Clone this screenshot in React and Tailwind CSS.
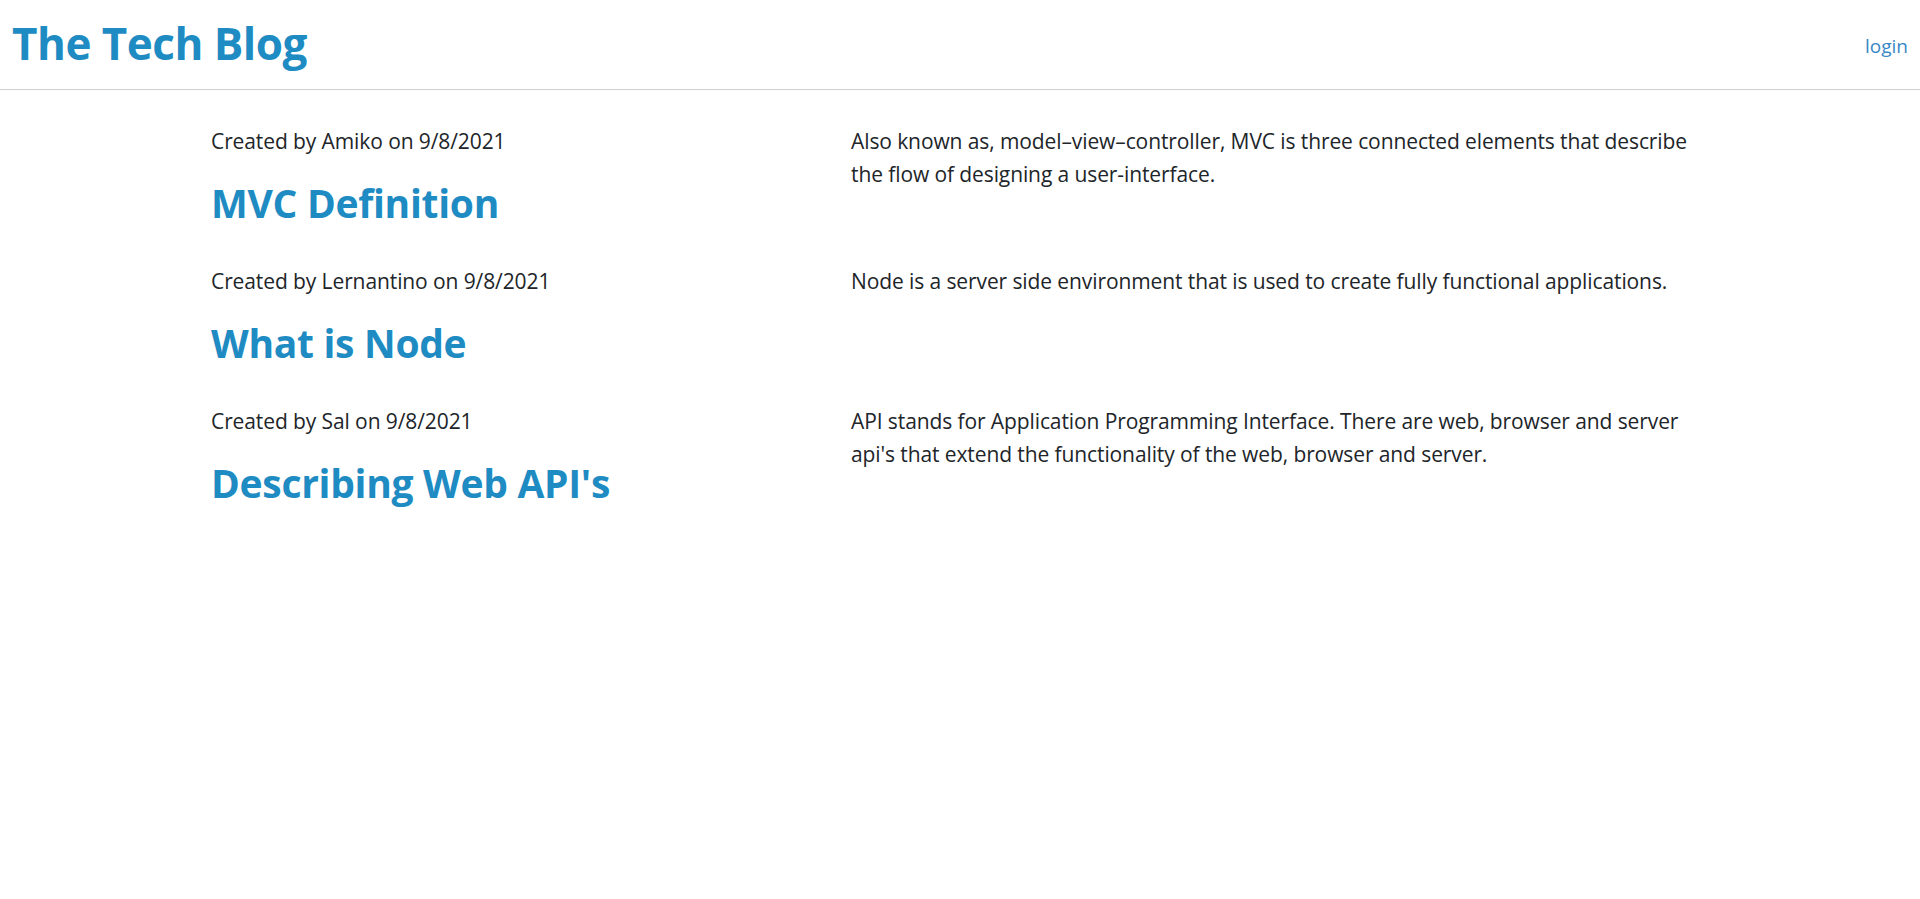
const posts = [
  {
    author: "Amiko",
    date: "9/8/2021",
    title: "MVC Definition",
    body: "Also known as, model–view–controller, MVC is three connected elements that describe the flow of designing a user-interface.",
  },
  {
    author: "Lernantino",
    date: "9/8/2021",
    title: "What is Node",
    body: "Node is a server side environment that is used to create fully functional applications.",
  },
  {
    author: "Sal",
    date: "9/8/2021",
    title: "Describing Web API's",
    body: "API stands for Application Programming Interface. There are web, browser and server api's that extend the functionality of the web, browser and server.",
  },
];

const App = () => {
  return (
    <div className="min-h-screen bg-white font-['Open_Sans',sans-serif] text-[#212529]">
      {/* Header */}
      <header className="h-[90px] flex items-center justify-between px-3 border-b border-[#cfcfcf]">
        <h1 className="text-[44px] font-bold text-[#1e8bc3] tracking-[-0.5px] leading-none pb-1">
          The Tech Blog
        </h1>
        <a href="/login" className="text-[19px] text-[#3a88c5] pt-1">
          login
        </a>
      </header>

      {/* Posts */}
      <main className="mx-auto w-[1498px] pt-[35px]">
        {posts.map((post, index) => (
          <div key={index} className="grid grid-cols-[640px_1fr] h-[140px]">
            <div>
              <p className="text-[21px] leading-[32px] tracking-[-0.1px]">
                Created by {post.author} on {post.date}
              </p>
              <h2 className="mt-[22px] text-[39px] font-bold leading-[48px] text-[#1e8bc3] tracking-[-0.3px]">
                {post.title}
              </h2>
            </div>
            <p className="text-[21px] leading-[33px] tracking-[-0.1px]">{post.body}</p>
          </div>
        ))}
      </main>
    </div>
  );
};

export default App;
